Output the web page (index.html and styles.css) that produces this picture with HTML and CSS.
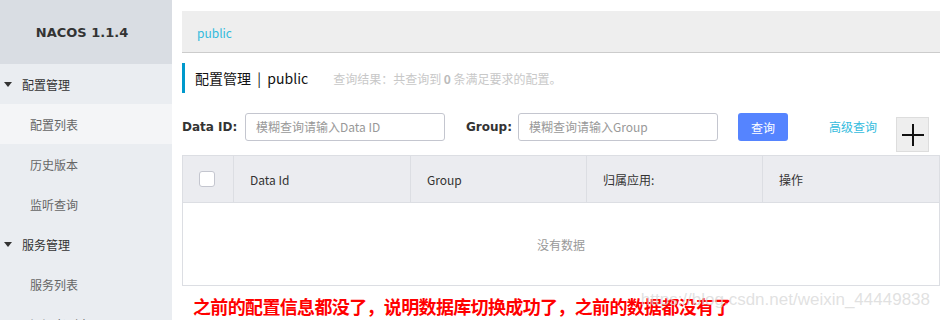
FILE: index.html
```html
<!DOCTYPE html>
<html lang="zh">
<head>
<meta charset="utf-8">
<title>Nacos</title>
<link rel="stylesheet" href="styles.css">
</head>
<body>
<aside class="sidebar">
  <div class="brand">NACOS 1.1.4</div>
  <div class="group"><span class="caret"></span>配置管理</div>
  <div class="item active">配置列表</div>
  <div class="item">历史版本</div>
  <div class="item">监听查询</div>
  <div class="group"><span class="caret"></span>服务管理</div>
  <div class="item">服务列表</div>
  <div class="item">订阅者列表</div>
</aside>
<main class="main">
  <div class="topbar"><span class="ns">public</span></div>
  <div class="title">
    <span class="title-main">配置管理&nbsp;&nbsp;|&nbsp;&nbsp;public</span>
    <span class="title-sub">查询结果：共查询到 <b>0</b> 条满足要求的配置。</span>
  </div>
  <div class="form">
    <label class="lbl">Data ID:</label>
    <div class="input">模糊查询请输入Data ID</div>
    <label class="lbl lbl-group">Group:</label>
    <div class="input">模糊查询请输入Group</div>
    <button class="btn">查询</button>
    <a class="adv">高级查询</a>
    <button class="plus" aria-label="add">
      <svg width="24" height="24" viewBox="0 0 24 24"><path d="M12 1v22M1 12h22" stroke="#111" stroke-width="2" fill="none"/></svg>
    </button>
  </div>
  <div class="table">
    <div class="thead">
      <div class="th th-check"><span class="checkbox"></span></div>
      <div class="th th-id">Data Id</div>
      <div class="th th-group">Group</div>
      <div class="th th-app">归属应用:</div>
      <div class="th th-op">操作</div>
    </div>
    <div class="tbody">没有数据</div>
  </div>
  <p class="note">之前的配置信息都没了，说明数据库切换成功了，之前的数据都没有了</p>
  <span class="watermark">https://blog.csdn.net/weixin_44449838</span>
</main>
</body>
</html>
```
FILE: styles.css
```css
* { box-sizing: border-box; }
html, body { margin: 0; padding: 0; }
body {
  width: 941px;
  height: 320px;
  overflow: hidden;
  display: flex;
  background: #fff;
  font-family: "Noto Sans CJK SC", "Noto Sans", sans-serif;
  font-size: 12px;
  color: #333;
}
.sidebar {
  width: 172px;
  flex: none;
  background: #eaedf1;
  height: 320px;
  overflow: hidden;
}
.brand {
  height: 64px;
  background: #d9dde3;
  display: flex;
  align-items: center;
  justify-content: center;
  padding-right: 8px;
  font-family: "DejaVu Sans", sans-serif;
  font-weight: bold;
  font-size: 13px;
  color: #333;
}
.group {
  height: 40px;
  display: flex;
  align-items: center;
  padding-left: 4px;
  color: #333;
}
.caret {
  width: 0; height: 0;
  border-left: 4px solid transparent;
  border-right: 4px solid transparent;
  border-top: 5px solid #333;
  margin-right: 10px;
}
.item {
  height: 40px;
  display: flex;
  align-items: center;
  padding-left: 30px;
  color: #666;
}
.item.active { background: #f4f5f7; }

.main {
  flex: 1;
  position: relative;
  height: 320px;
  overflow: hidden;
  padding: 11px 1px 0 10px;
}
.topbar {
  height: 42px;
  background: #eeeeee;
  border-bottom: 1px solid #cccccc;
  display: flex;
  align-items: center;
  padding-left: 15px;
  padding-top: 2px;
}
.ns { color: #33bbdd; font-size: 12px; }
.title {
  margin-top: 10px;
  height: 30px;
  border-left: 3px solid #0099cc;
  padding-left: 10px;
  display: flex;
  align-items: center;
}
.title-main { font-size: 14px; color: #111; }
.title-sub { margin-left: 25px; color: #c8c8c8; font-size: 12px; }
.title-sub b { color: #bbb; }
.form {
  margin-top: 20px;
  display: flex;
  align-items: flex-start;
}
.lbl {
  height: 28px;
  line-height: 28px;
  font-family: "DejaVu Sans", sans-serif;
  font-weight: bold;
  font-size: 12px;
  color: #333;
  width: 63px;
}
.lbl-group { width: 52px; margin-left: 21px; }
.input {
  width: 200px;
  height: 28px;
  border: 1px solid #c4c6cf;
  border-radius: 3px;
  padding-left: 10px;
  line-height: 26px;
  color: #999;
  font-size: 12px;
}
.btn {
  margin-left: 20px;
  width: 50px;
  height: 28px;
  border: 0;
  border-radius: 3px;
  background: #5584ff;
  color: #fff;
  font-family: inherit;
  font-size: 12px;
  padding: 0;
}
.adv {
  margin-left: 41px;
  height: 28px;
  line-height: 28px;
  color: #33bbdd;
  font-size: 12px;
}
.plus {
  margin-left: 19px;
  margin-top: 4px;
  width: 33px;
  height: 35px;
  background: #eeeeee;
  border: 1px solid #dddddd;
  padding: 0;
  display: flex;
  align-items: center;
  justify-content: center;
}
.table {
  margin-top: 3px;
  border: 1px solid #dcdee3;
}
.thead {
  display: flex;
  height: 47px;
  background: #ebecf0;
  border-bottom: 1px solid #dcdee3;
}
.th {
  display: flex;
  align-items: center;
  padding-left: 16px;
  border-right: 1px solid #dcdee3;
  color: #333;
  font-size: 12px;
}
.th-check { width: 51px; padding-left: 16px; }
.th-id { width: 177px; }
.th-group { width: 176px; }
.th-app { width: 176px; }
.th-op { flex: 1; border-right: 0; }
.checkbox {
  width: 16px;
  height: 16px;
  border: 1px solid #c4c6cf;
  border-radius: 3px;
  background: #fff;
}
.tbody {
  height: 82px;
  display: flex;
  align-items: center;
  justify-content: center;
  color: #999;
  font-size: 12px;
}
.note {
  margin: 8px 0 0 11px;
  color: #ff0000;
  font-weight: bold;
  font-size: 18px;
  line-height: 24px;
  letter-spacing: -0.65px;
}
.watermark {
  position: absolute;
  right: 11px;
  top: 290px;
  font-family: "Liberation Sans", sans-serif;
  font-size: 17px;
  color: rgba(215, 215, 215, 0.75);
}
```
